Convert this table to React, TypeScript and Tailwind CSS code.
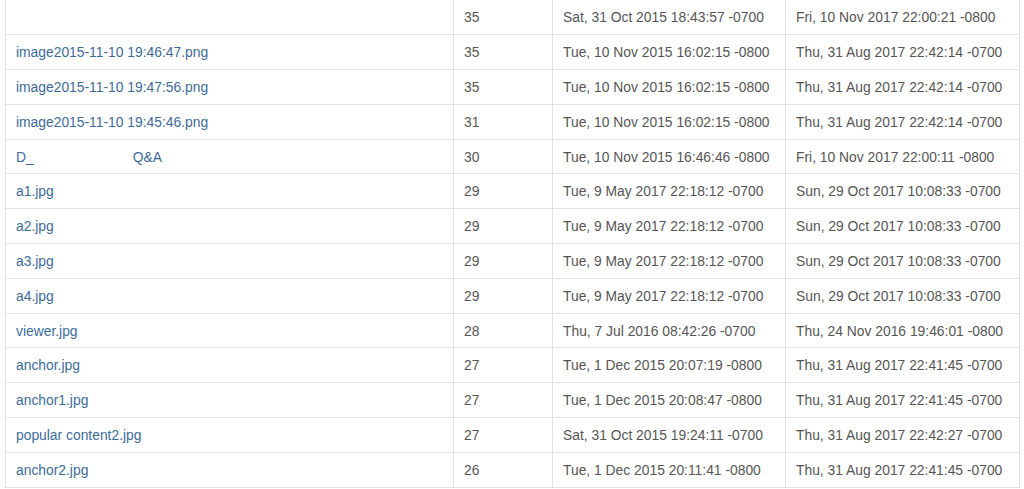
const rows: [string, string, string, string][] = [
  ["", "35", "Sat, 31 Oct 2015 18:43:57 -0700", "Fri, 10 Nov 2017 22:00:21 -0800"],
  ["image2015-11-10 19:46:47.png", "35", "Tue, 10 Nov 2015 16:02:15 -0800", "Thu, 31 Aug 2017 22:42:14 -0700"],
  ["image2015-11-10 19:47:56.png", "35", "Tue, 10 Nov 2015 16:02:15 -0800", "Thu, 31 Aug 2017 22:42:14 -0700"],
  ["image2015-11-10 19:45:46.png", "31", "Tue, 10 Nov 2015 16:02:15 -0800", "Thu, 31 Aug 2017 22:42:14 -0700"],
  ["D_|Q&A", "30", "Tue, 10 Nov 2015 16:46:46 -0800", "Fri, 10 Nov 2017 22:00:11 -0800"],
  ["a1.jpg", "29", "Tue, 9 May 2017 22:18:12 -0700", "Sun, 29 Oct 2017 10:08:33 -0700"],
  ["a2.jpg", "29", "Tue, 9 May 2017 22:18:12 -0700", "Sun, 29 Oct 2017 10:08:33 -0700"],
  ["a3.jpg", "29", "Tue, 9 May 2017 22:18:12 -0700", "Sun, 29 Oct 2017 10:08:33 -0700"],
  ["a4.jpg", "29", "Tue, 9 May 2017 22:18:12 -0700", "Sun, 29 Oct 2017 10:08:33 -0700"],
  ["viewer.jpg", "28", "Thu, 7 Jul 2016 08:42:26 -0700", "Thu, 24 Nov 2016 19:46:01 -0800"],
  ["anchor.jpg", "27", "Tue, 1 Dec 2015 20:07:19 -0800", "Thu, 31 Aug 2017 22:41:45 -0700"],
  ["anchor1.jpg", "27", "Tue, 1 Dec 2015 20:08:47 -0800", "Thu, 31 Aug 2017 22:41:45 -0700"],
  ["popular content2.jpg", "27", "Sat, 31 Oct 2015 19:24:11 -0700", "Thu, 31 Aug 2017 22:42:27 -0700"],
  ["anchor2.jpg", "26", "Tue, 1 Dec 2015 20:11:41 -0800", "Thu, 31 Aug 2017 22:41:45 -0700"],
];

function NameCell({ name }: { name: string }) {
  if (name.includes("|")) {
    const [a, b] = name.split("|");
    return (
      <a className="text-[#3d6b98]">
        {a}
        <span className="ml-[99px]">{b}</span>
      </a>
    );
  }
  return <a className="text-[#3d6b98]">{name}</a>;
}

export default function App() {
  return (
    <div className="h-[489px] overflow-hidden bg-white font-['Liberation_Sans',Arial,sans-serif] text-[13.85px] text-[#555]">
      <table className="ml-[5px] w-[1014px] table-fixed border-collapse">
        <colgroup>
          <col className="w-[448px]" />
          <col className="w-[99px]" />
          <col className="w-[233px]" />
          <col className="w-[234px]" />
        </colgroup>
        <tbody>
          {rows.map((r, i) => (
            <tr key={i} className="h-[34.8px]">
              <td className={`border-x border-b border-[#e2e2e2] px-[10px] py-0 leading-[20px] ${i === 0 ? "" : "border-t"}`}>
                <NameCell name={r[0]} />
              </td>
              <td className="border border-t-0 border-[#e2e2e2] px-[10px] py-0 leading-[20px]">{r[1]}</td>
              <td className="border border-t-0 border-[#e2e2e2] px-[10px] py-0 leading-[20px]">{r[2]}</td>
              <td className="border border-t-0 border-[#e2e2e2] px-[10px] py-0 leading-[20px]">{r[3]}</td>
            </tr>
          ))}
        </tbody>
      </table>
    </div>
  );
}
